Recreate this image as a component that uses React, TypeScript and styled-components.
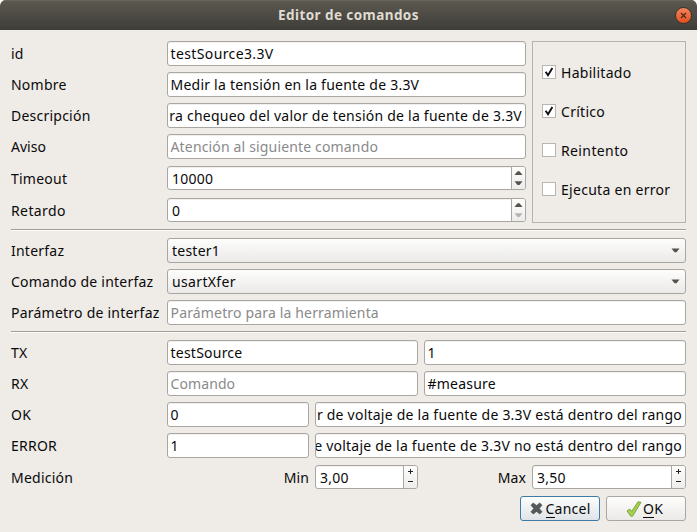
import React from "react";
import styled, { createGlobalStyle, css } from "styled-components";

const GlobalStyle = createGlobalStyle`
  * { box-sizing: border-box; }
  body { margin: 0; background: #fff; }
`;

const frame = "#aaa6a2";

const Window = styled.div`
  width: 697px;
  height: 532px;
  overflow: hidden;
  display: flex;
  flex-direction: column;
  border-radius: 6px 6px 0 0;
  background: #efebe7;
  color: #0a0a0a;
  font: 14px/20px "Noto Sans", "Open Sans", sans-serif;
  white-space: nowrap;
`;

const TitleBar = styled.header`
  height: 30px;
  display: grid;
  grid-template-columns: 1fr auto 1fr;
  align-items: center;
  padding-right: 5px;
  background: linear-gradient(#5c5950, #3e3d38);
  box-shadow: inset 0 1px #68655b;
`;

const Title = styled.h1`
  grid-column: 2;
  margin: 0 0 0 5px;
  color: #dfdbd2;
  font-size: 13.5px;
  font-weight: 700;
  line-height: 30px;
  letter-spacing: 0.42px;
`;

const CloseButton = styled.button`
  justify-self: end;
  display: grid;
  place-items: center;
  width: 17px;
  height: 17px;
  padding: 0;
  border: 1px solid #35332e;
  border-radius: 50%;
  background: linear-gradient(#f5845c, #e2511f);
`;

const Body = styled.main`
  display: flex;
  flex-direction: column;
  padding: 11px 11px 0;
`;

const TopSection = styled.section`
  display: grid;
  grid-template-columns: 515px 154px;
  column-gap: 6px;
  height: 182px;
  margin-bottom: 6px;
`;

const Rows = styled.div`
  display: flex;
  flex-direction: column;
  gap: 6px;
`;

const Row = styled.div<{ $cols: string; $top?: number }>`
  display: grid;
  grid-template-columns: 150px ${(p) => p.$cols};
  column-gap: 6px;
  align-items: center;
  margin-top: ${(p) => p.$top ?? 0}px;
`;

const Text = styled.span<{ $track?: number; $low?: boolean }>`
  letter-spacing: ${(p) => p.$track ?? 0.23}px;
  padding-top: ${(p) => (p.$low ? 2 : 0)}px;
`;

const Label = styled(Text)<{ $end?: boolean }>`
  text-align: ${(p) => (p.$end ? "right" : "left")};
`;

const box = css`
  display: flex;
  align-items: center;
  min-width: 0;
  border: 1px solid ${frame};
  border-radius: 3px;
  background: #fff;
  overflow: hidden;
`;

const Field = styled.div<{ $muted?: boolean; $scrolled?: boolean }>`
  ${box}
  height: 25px;
  padding: 0 ${(p) => (p.$scrolled ? 3 : 2.5)}px 0 ${(p) => (p.$scrolled ? 0 : 2.5)}px;
  justify-content: ${(p) => (p.$scrolled ? "flex-end" : "flex-start")};
  color: ${(p) => (p.$muted ? "#8a8a8a" : "inherit")};
  box-shadow: inset 0 1px #f1f0ef;
`;

const Spin = styled.div`
  ${box}
  height: 24px;
  padding-left: 4px;
  justify-content: space-between;
  box-shadow: inset 0 1px #f1f0ef;
`;

const SpinButtons = styled.span`
  display: grid;
  place-items: center;
  width: 14px;
  height: 22px;
  border-left: 1px solid ${frame};
  background: linear-gradient(#fdfdfc, #eeedeb);
`;

const Combo = styled.div`
  ${box}
  height: 25px;
  padding: 0 5px 0 4px;
  justify-content: space-between;
  background: linear-gradient(#fdfdfc, #ebeae8);
`;

const Separator = styled.hr`
  width: 675px;
  height: 2px;
  margin: 0;
  border: 0;
  border-top: 1px solid #a19e98;
  background: #fcfbfa;
`;

const Options = styled.div`
  display: flex;
  flex-direction: column;
  gap: 19px;
  padding: 20px 0 0 9px;
  border: 1px solid #b5b1ad;
`;

const Option = styled.label`
  display: flex;
  align-items: center;
  gap: 5px;
  height: 20px;
`;

const CheckBox = styled.span`
  display: grid;
  place-items: center;
  width: 14px;
  height: 14px;
  border: 1px solid #b9b5b1;
  background: #fff;
`;

const Actions = styled.footer`
  display: flex;
  justify-content: flex-end;
  gap: 6px;
  margin-top: 7px;
`;

const Button = styled.button<{ $focused?: boolean }>`
  display: flex;
  align-items: center;
  justify-content: center;
  gap: ${(p) => (p.$focused ? 3 : 1)}px;
  width: 80px;
  height: 25px;
  padding: 0 ${(p) => (p.$focused ? 0 : 3)}px 0 0;
  border: 1px solid ${(p) => (p.$focused ? "#3e7aa3" : frame)};
  border-radius: 3px;
  background: ${(p) =>
    p.$focused
      ? "linear-gradient(#fcfdfd, #dfe4e8)"
      : "linear-gradient(#fdfdfc, #ebeae8)"};
  color: inherit;
  font: inherit;
`;

const Mnemonic = styled.span`
  display: inline-block;
  height: 19px;
  line-height: 20px;
  border-bottom: 1px solid #0a0a0a;
`;

const ComboArrow = () => (
  <svg width="9" height="5" viewBox="0 0 9 5">
    <path d="M.5 .5h8L5.5 4.2h-2z" fill="#555350" />
  </svg>
);

const Arrows = ({ atMinimum = false }: { atMinimum?: boolean }) => (
  <SpinButtons>
    <svg width="13" height="22" viewBox="0 0 13 22">
      <path d="M2.5 8h8L7.5 4.2h-2z" fill="#555350" />
      <path d="M2.5 14.2h8l-3 3.8h-2z" fill={atMinimum ? "#b5b3b0" : "#555350"} />
    </svg>
  </SpinButtons>
);

const PlusMinus = () => (
  <SpinButtons>
    <svg width="13" height="22" viewBox="0 0 13 22">
      <path d="M4 5.5h5M6.5 3v5M4 15.5h5" stroke="#222" fill="none" />
    </svg>
  </SpinButtons>
);

const Check = ({ label, on, track }: { label: string; on?: boolean; track?: number }) => (
  <Option>
    <CheckBox>
      {on && (
        <svg width="12" height="12" viewBox="0 0 12 12">
          <path d="M2.6 5.8 5 9.2 9.4 2" fill="none" stroke="#111" strokeWidth="1.9" />
        </svg>
      )}
    </CheckBox>
    <Text $track={track} $low>{label}</Text>
  </Option>
);

export default function App() {
  return (
    <>
      <GlobalStyle />
      <Window>
        <TitleBar>
          <Title>Editor de comandos</Title>
          <CloseButton aria-label="Cerrar">
            <svg width="7" height="7" viewBox="0 0 7 7">
              <path d="M1 1l5 5M6 1L1 6" stroke="#4b2a1c" strokeWidth="1.2" />
            </svg>
          </CloseButton>
        </TitleBar>
        <Body>
          <TopSection>
            <Rows>
              <Row $cols="359px">
                <Label>id</Label>
                <Field><Text $track={0.38}>testSource3.3V</Text></Field>
              </Row>
              <Row $cols="359px">
                <Label>Nombre</Label>
                <Field><Text>Medir la tensión en la fuente de 3.3V</Text></Field>
              </Row>
              <Row $cols="359px">
                <Label>Descripción</Label>
                <Field $scrolled><Text>ra chequeo del valor de tensión de la fuente de 3.3V</Text></Field>
              </Row>
              <Row $cols="359px">
                <Label $track={0}>Aviso</Label>
                <Field $muted><Text $track={0.16}>Atención al siguiente comando</Text></Field>
              </Row>
              <Row $cols="359px" $top={1}>
                <Label $low>Timeout</Label>
                <Spin><Text $low>10000</Text><Arrows /></Spin>
              </Row>
              <Row $cols="359px" $top={2}>
                <Label $low $track={0.4}>Retardo</Label>
                <Spin><Text $low>0</Text><Arrows atMinimum /></Spin>
              </Row>
            </Rows>
            <Options>
              <Check label="Habilitado" on track={0.28} />
              <Check label="Crítico" on track={0.28} />
              <Check label="Reintento" track={0.38} />
              <Check label="Ejecuta en error" track={0.28} />
            </Options>
          </TopSection>
          <Rows>
            <Separator />
            <Row $cols="519px" $top={1}>
              <Label>Interfaz</Label>
              <Combo><Text>tester1</Text><ComboArrow /></Combo>
            </Row>
            <Row $cols="519px">
              <Label>Comando de interfaz</Label>
              <Combo><Text $track={0.35}>usartXfer</Text><ComboArrow /></Combo>
            </Row>
            <Row $cols="519px">
              <Label>Parámetro de interfaz</Label>
              <Field $muted><Text $track={0.16}>Parámetro para la herramienta</Text></Field>
            </Row>
            <Separator />
            <Row $cols="251px 262px" $top={1}>
              <Label>TX</Label>
              <Field><Text>testSource</Text></Field>
              <Field><Text>1</Text></Field>
            </Row>
            <Row $cols="251px 262px">
              <Label>RX</Label>
              <Field $muted><Text $track={0.1}>Comando</Text></Field>
              <Field><Text>#measure</Text></Field>
            </Row>
            <Row $cols="142px 371px">
              <Label>OK</Label>
              <Field><Text>0</Text></Field>
              <Field $scrolled><Text>r de voltaje de la fuente de 3.3V está dentro del rango</Text></Field>
            </Row>
            <Row $cols="142px 371px">
              <Label>ERROR</Label>
              <Field><Text>1</Text></Field>
              <Field $scrolled><Text>e voltaje de la fuente de 3.3V no está dentro del rango</Text></Field>
            </Row>
            <Row $cols="142px 103px 102px 154px" $top={1}>
              <Label $low>Medición</Label>
              <Label $low $end $track={0.1}>Min</Label>
              <Spin><Text $low>3,00</Text><PlusMinus /></Spin>
              <Label $low $end $track={0.1}>Max</Label>
              <Spin><Text $low>3,50</Text><PlusMinus /></Spin>
            </Row>
          </Rows>
          <Actions>
            <Button $focused>
              <svg width="13" height="13" viewBox="0 0 13 13">
                <path d="M1 3.2 3.2 1l3.3 2.6L9.8 1 12 3.2 9.2 6.5 12 9.8 9.8 12 6.5 9.4 3.2 12 1 9.8l2.8-3.3z" fill="#555957" stroke="#3c3f3d" strokeWidth=".6" />
              </svg>
              <Text><Mnemonic>C</Mnemonic>ancel</Text>
            </Button>
            <Button>
              <svg width="16" height="16" viewBox="0 0 16 16">
                <path d="M1 10l2.8-1.9 1.9 2.3L12 .8l3 .5L6.6 15.2H4.8z" fill="#a6d24c" stroke="#64922f" strokeWidth=".8" strokeLinejoin="round" />
              </svg>
              <Text><Mnemonic>O</Mnemonic>K</Text>
            </Button>
          </Actions>
        </Body>
      </Window>
    </>
  );
}
